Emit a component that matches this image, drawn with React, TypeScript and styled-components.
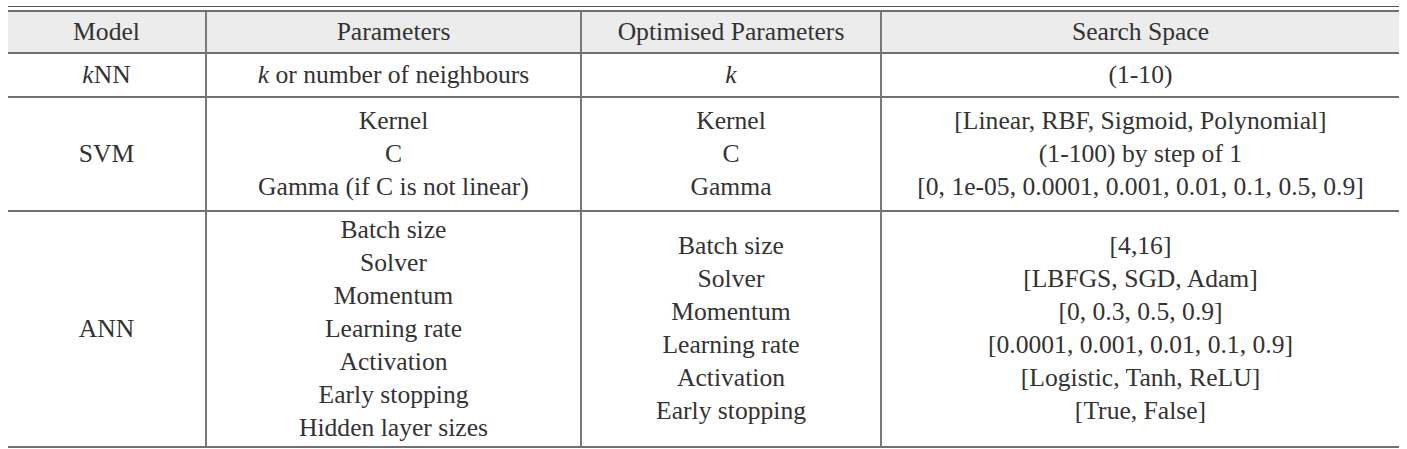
import React from "react";
import styled, { createGlobalStyle } from "styled-components";

const Global = createGlobalStyle`
  html, body { margin: 0; padding: 0; background: #ffffff; }
  body { font-family: "Liberation Serif", "Times New Roman", serif; }
`;

const Page = styled.div`
  padding: 6px 8px 0 8px;
  font-family: "Liberation Serif", "Times New Roman", serif;
  color: #333333;
`;

const TopRule = styled.div`
  width: 1391px;
  height: 1px;
  background: #555555;
  margin-bottom: 3px;
`;

const Grid = styled.div`
  display: grid;
  width: 1391px;
  grid-template-columns: 199px 375px 300px 517px;
  grid-template-rows: 42px 44px 114px 236px;
  border-top: 2px solid #6f6f6f;
`;

const Cell = styled.div<{ $head?: boolean; $last?: boolean }>`
  box-sizing: border-box;
  display: flex;
  flex-direction: column;
  align-items: center;
  justify-content: center;
  text-align: center;
  font-family: "Liberation Serif", "Times New Roman", serif;
  font-size: 25.6px;
  line-height: 33px;
  padding-bottom: 2px;
  background: ${(p) => (p.$head ? "#ececec" : "#ffffff")};
  border-bottom: 2px solid #6f6f6f;
  border-right: ${(p) => (p.$last ? "none" : "2px solid #7a7a7a")};
  white-space: nowrap;
`;

const Line = styled.span`
  display: block;
`;

const K = styled.i`
  font-style: italic;
`;

const headers = ["Model", "Parameters", "Optimised Parameters", "Search Space"];

const rows: React.ReactNode[][][] = [
  [
    [<><K>k</K>NN</>],
    [<><K>k</K> or number of neighbours</>],
    [<K>k</K>],
    ["(1-10)"],
  ],
  [
    ["SVM"],
    ["Kernel", "C", "Gamma (if C is not linear)"],
    ["Kernel", "C", "Gamma"],
    [
      "[Linear, RBF, Sigmoid, Polynomial]",
      "(1-100) by step of 1",
      "[0, 1e-05, 0.0001, 0.001, 0.01, 0.1, 0.5, 0.9]",
    ],
  ],
  [
    ["ANN"],
    [
      "Batch size",
      "Solver",
      "Momentum",
      "Learning rate",
      "Activation",
      "Early stopping",
      "Hidden layer sizes",
    ],
    ["Batch size", "Solver", "Momentum", "Learning rate", "Activation", "Early stopping"],
    [
      "[4,16]",
      "[LBFGS, SGD, Adam]",
      "[0, 0.3, 0.5, 0.9]",
      "[0.0001, 0.001, 0.01, 0.1, 0.9]",
      "[Logistic, Tanh, ReLU]",
      "[True, False]",
    ],
  ],
];

export default function App() {
  return (
    <Page>
      <Global />
      <TopRule />
      <Grid>
        {headers.map((h, i) => (
          <Cell key={h} $head $last={i === headers.length - 1}>
            {h}
          </Cell>
        ))}
        {rows.map((row, r) =>
          row.map((cell, c) => (
            <Cell key={`${r}-${c}`} $last={c === row.length - 1}>
              {cell.map((line, l) => (
                <Line key={l}>{line}</Line>
              ))}
            </Cell>
          ))
        )}
      </Grid>
    </Page>
  );
}
